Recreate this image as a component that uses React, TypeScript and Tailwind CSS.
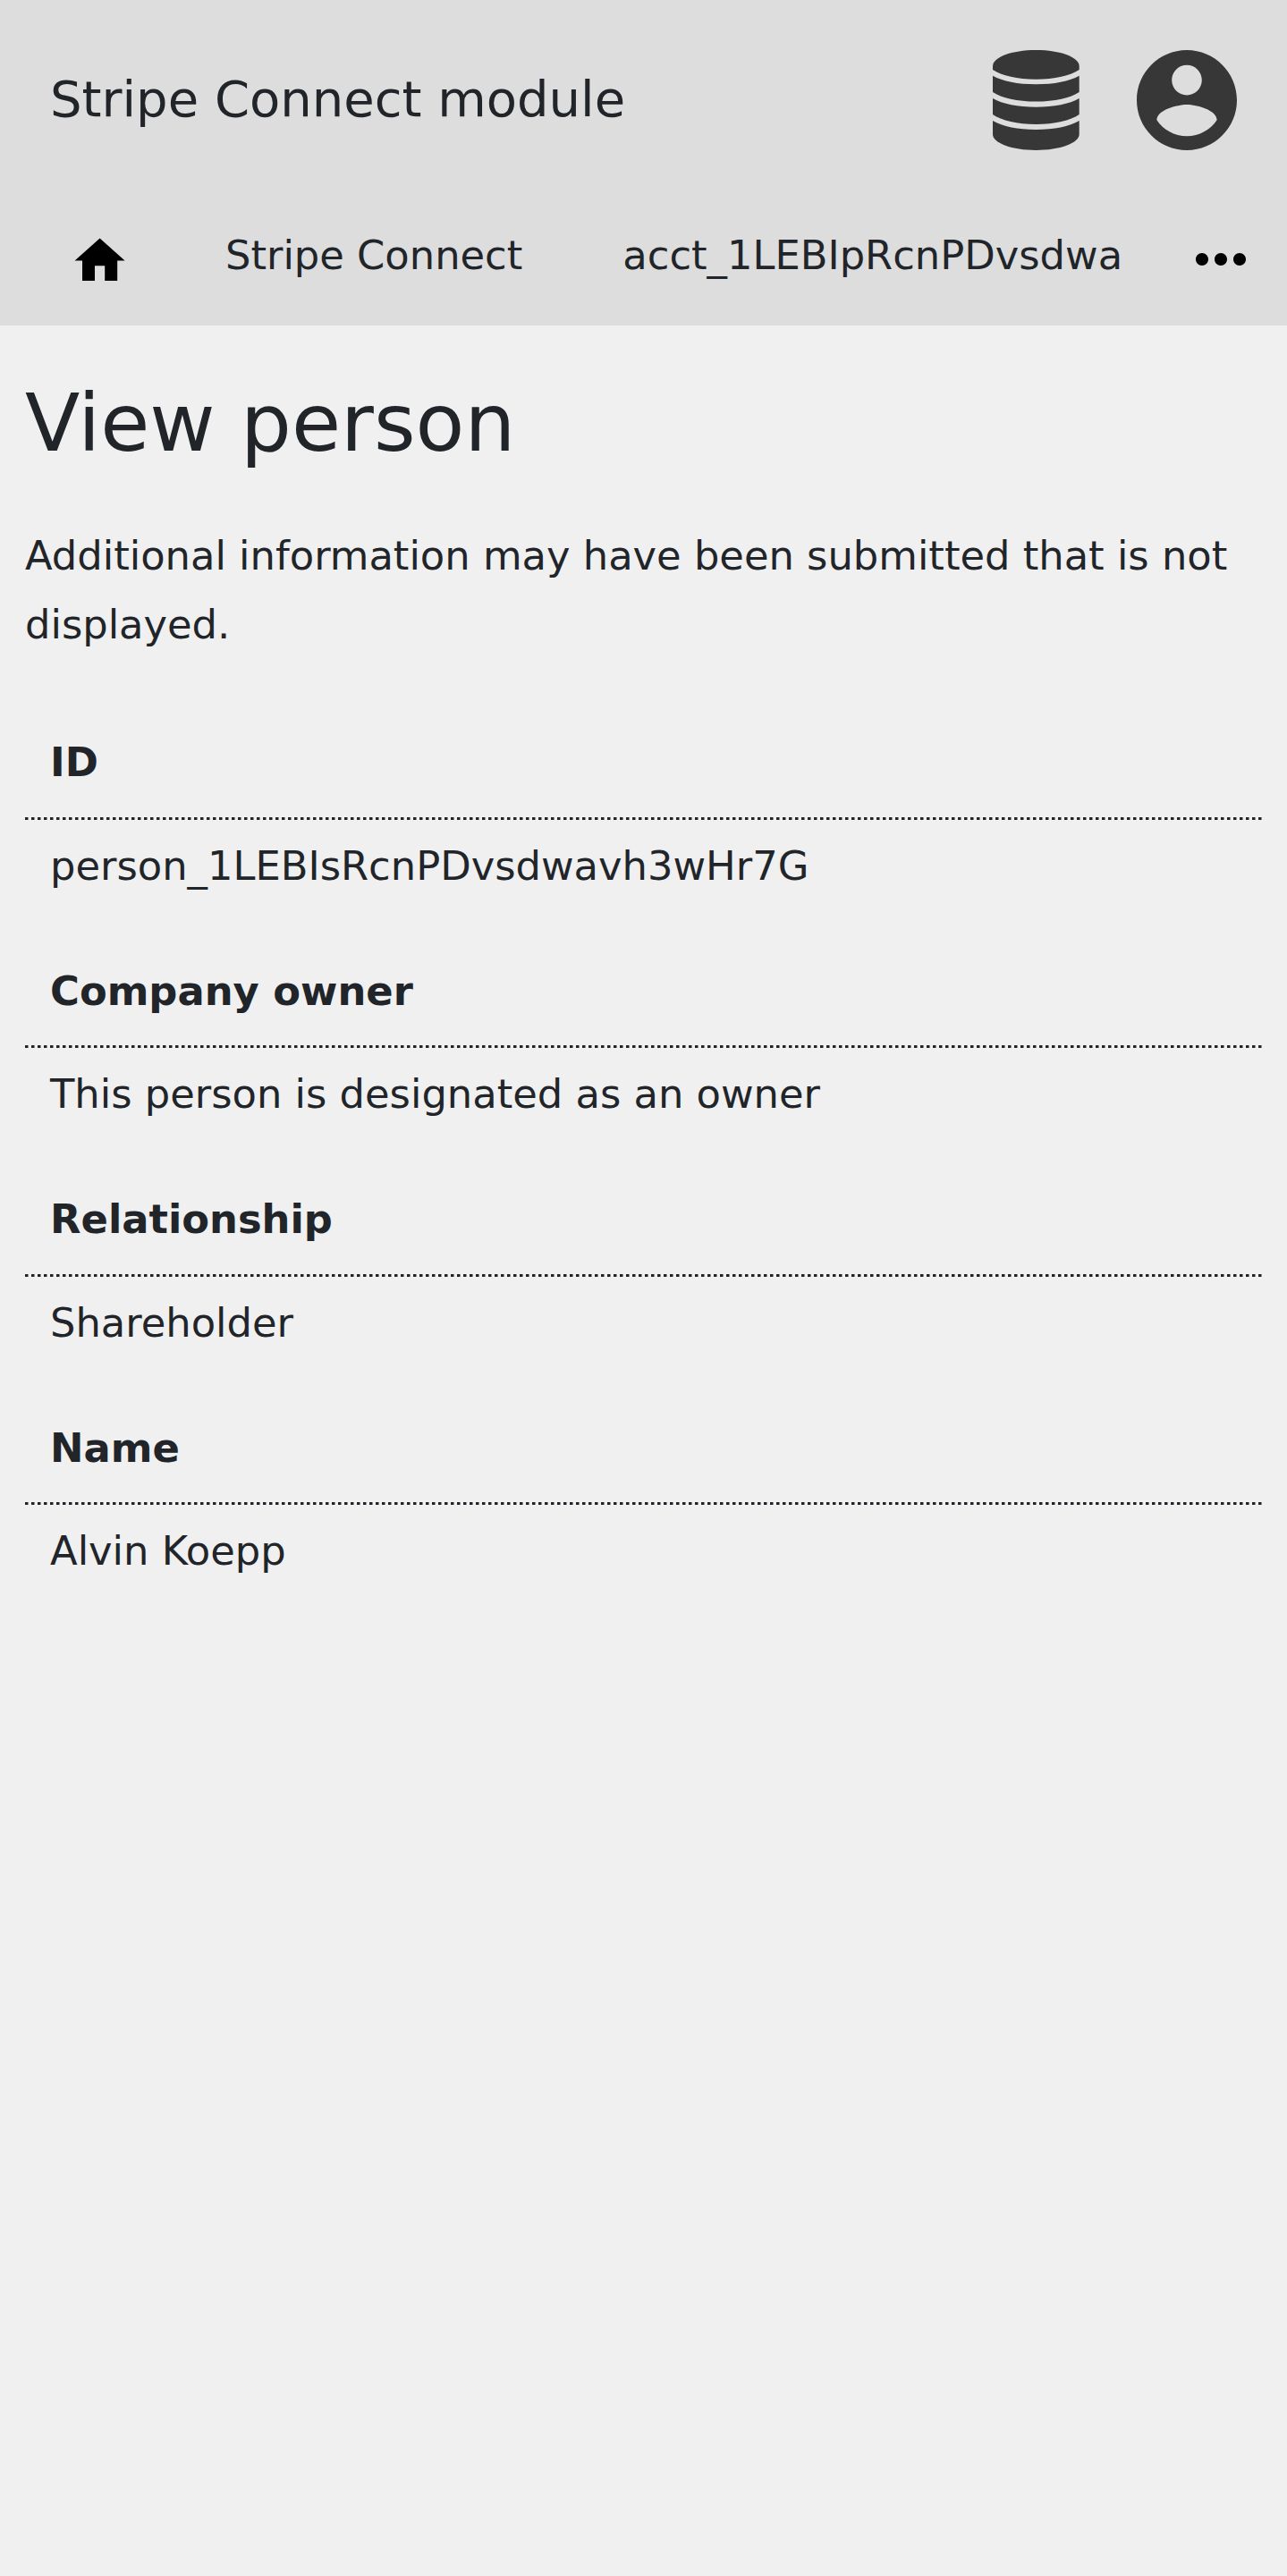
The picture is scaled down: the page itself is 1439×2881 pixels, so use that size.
import { MdHome, MdMoreHoriz } from "react-icons/md";

const rows = [
  ["ID", "person_1LEBIsRcnPDvsdwavh3wHr7G"],
  ["Company owner", "This person is designated as an owner"],
  ["Relationship", "Shareholder"],
  ["Name", "Alvin Koepp"],
];

function DatabaseIcon() {
  return (
    <svg viewBox="0 0 96.7 112" className="mr-16 h-[112px] w-[96.7px] shrink-0 fill-[#373737]">
      <path d="M0 18C0 8 21 0 48.35 0S96.7 8 96.7 18V22C87 28.5 69 32.7 48.35 32.7S9.7 28.5 0 22Z" />
      <path d="M0 28.8C11 35 28 38.3 48.35 38.3S85.7 35 96.7 28.8V47C87 53.5 69 57.6 48.35 57.6S9.7 53.5 0 47Z" />
      <path d="M0 54C11 60.2 28 63.7 48.35 63.7S85.7 60.2 96.7 54V72C87 78.7 69 82.9 48.35 82.9S9.7 78.7 0 72Z" />
      <path d="M0 79C11 85.4 28 89 48.35 89S85.7 85.4 96.7 79V94.3C96.7 104 75 112 48.35 112S0 104 0 94.3Z" />
    </svg>
  );
}

function AccountIcon() {
  return (
    <svg viewBox="2 2 20 20" className="h-[112px] w-[112px] shrink-0 fill-[#373737]">
      <path d="M12 2C6.48 2 2 6.48 2 12s4.48 10 10 10 10-4.48 10-10S17.52 2 12 2zm0 3c1.66 0 3 1.34 3 3s-1.34 3-3 3-3-1.34-3-3 1.34-3 3-3zm0 14.2c-2.5 0-4.71-1.28-6-3.22.03-1.99 4-3.08 6-3.08 1.99 0 5.97 1.09 6 3.08-1.29 1.94-3.5 3.22-6 3.22z" />
    </svg>
  );
}

export default function App() {
  return (
    <div className="min-h-[2881px] w-[1439px] overflow-hidden bg-[#f0f0f0] font-['DejaVu_Sans',sans-serif] text-[44.8px] leading-[77px] text-[#212529]">
      <header className="h-[364px] bg-[#dddddd]">
        <div className="flex h-[224px] items-center px-14">
          <div className="grow pb-[3px] text-[56px]">Stripe Connect module</div>
          <DatabaseIcon />
          <AccountIcon />
        </div>
        <nav className="flex pt-[23px]">
          <MdHome className="mt-[11.3px] ml-[78.4px] h-[67.2px] w-[67.2px] text-black" />
          <span className="ml-[106.4px]">Stripe Connect</span>
          <span className="ml-[112px]">acct_1LEBIpRcnPDvsdwa</span>
          <MdMoreHoriz className="mt-[1.3px] mr-8 ml-auto h-[84px] w-[84px] text-black" />
        </nav>
      </header>
      <main className="px-7">
        <h1 className="pt-[55px] text-[89.6px] leading-[108px]">View person</h1>
        <p className="mt-[56px]">Additional information may have been submitted that is not displayed.</p>
        <dl className="mt-[56.1px]">
          {rows.map(([label, value]) => (
            <div key={label} className="h-[255.5px]">
              <dt className="px-7 pt-[21px] pb-[22.5px] font-bold">{label}</dt>
              <div className="h-[3px] bg-[repeating-linear-gradient(90deg,#212529_0_3px,#898b8d_3px_4px,transparent_4px_7px)]" />
              <dd className="px-7 pt-[13px]">{value}</dd>
            </div>
          ))}
        </dl>
      </main>
    </div>
  );
}
